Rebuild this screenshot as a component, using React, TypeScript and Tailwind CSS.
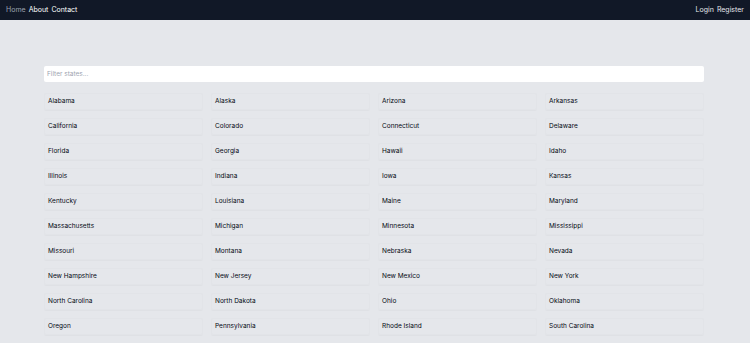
import { useState, useMemo } from 'react';

const states = [
  'Alabama', 'Alaska', 'Arizona', 'Arkansas', 'California', 'Colorado', 'Connecticut', 'Delaware',
  'Florida', 'Georgia', 'Hawaii', 'Idaho', 'Illinois', 'Indiana', 'Iowa', 'Kansas',
  'Kentucky', 'Louisiana', 'Maine', 'Maryland', 'Massachusetts', 'Michigan', 'Minnesota', 'Mississippi',
  'Missouri', 'Montana', 'Nebraska', 'Nevada', 'New Hampshire', 'New Jersey', 'New Mexico', 'New York',
  'North Carolina', 'North Dakota', 'Ohio', 'Oklahoma', 'Oregon', 'Pennsylvania', 'Rhode Island', 'South Carolina',
  'South Dakota', 'Tennessee', 'Texas', 'Utah', 'Vermont', 'Virginia', 'Washington', 'West Virginia',
  'Wisconsin', 'Wyoming',
];

export default function App() {
  const [query, setQuery] = useState('');

  const filtered = useMemo(
    () => states.filter((s) => s.toLowerCase().includes(query.toLowerCase())),
    [query]
  );

  return (
    <div className="min-h-[343px] bg-[#e5e7eb] font-['Inter',sans-serif]">
      {/* Top nav */}
      <nav className="h-[20px] bg-[#111827] flex items-center justify-between px-[6px] text-[7px]">
        <div className="flex gap-[3px]">
          <a className="text-[#9ca3af]">Home</a>
          <a className="text-white">About</a>
          <a className="text-white">Contact</a>
        </div>
        <div className="flex gap-[3px] text-[#e5e7eb]">
          <a>Login</a>
          <a>Register</a>
        </div>
      </nav>

      {/* States list */}
      <main className="pt-[38px] pl-[44px]">
        <div className="w-[660px]">
          <input
            value={query}
            onChange={(e) => setQuery(e.target.value)}
            placeholder="Filter states..."
            className="w-full h-[16px] bg-white rounded-[2px] px-[3px] text-[6.5px] text-[#111827] placeholder:text-[#9ca3af] outline-none mb-[11px]"
          />
          <div className="grid grid-cols-4 gap-x-[8px] gap-y-[8px]">
            {filtered.map((s) => (
              <div
                key={s}
                className="h-[17px] flex items-center px-[3px] rounded-[2px] text-[6.5px] text-[#030712] border border-[#e2e4e8] shadow-[0_1px_0_rgba(0,0,0,0.025)]"
              >
                {s}
              </div>
            ))}
          </div>
        </div>
      </main>
    </div>
  );
}
